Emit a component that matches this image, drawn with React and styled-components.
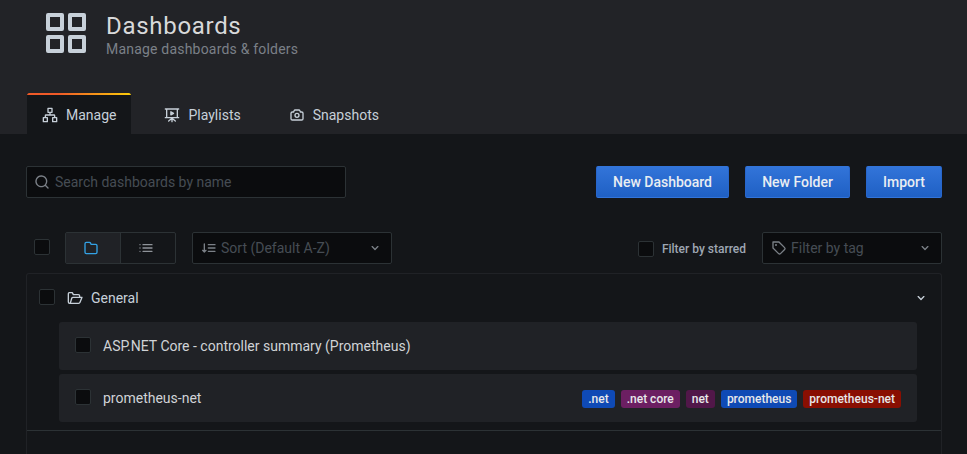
import React from "react";
import styled, { createGlobalStyle, css } from "styled-components";

const Global = createGlobalStyle`
  *, *::before, *::after { box-sizing: border-box; }
  body {
    margin: 0;
    background: #141619;
    color: #c7d0d9;
    font: 400 14px/20px Roboto, "Liberation Sans", sans-serif;
    overflow: hidden;
  }
`;

const icons = {
  apps: (
    <path fillRule="evenodd" d="M3 2h7a1 1 0 0 1 1 1v7a1 1 0 0 1-1 1H3a1 1 0 0 1-1-1V3a1 1 0 0 1 1-1ZM4 4v5h5V4ZM14 2h7a1 1 0 0 1 1 1v7a1 1 0 0 1-1 1h-7a1 1 0 0 1-1-1V3a1 1 0 0 1 1-1ZM15 4v5h5V4ZM3 13h7a1 1 0 0 1 1 1v7a1 1 0 0 1-1 1H3a1 1 0 0 1-1-1v-7a1 1 0 0 1 1-1ZM4 15v5h5v-5ZM14 13h7a1 1 0 0 1 1 1v7a1 1 0 0 1-1 1h-7a1 1 0 0 1-1-1v-7a1 1 0 0 1 1-1ZM15 15v5h5v-5Z" />
  ),
  sitemap: (
    <g fill="none" stroke="currentColor" strokeWidth="2" strokeLinejoin="round">
      <path d="M9 2h6v6H9ZM2 16h6v6H2ZM16 16h6v6h-6ZM12 8v4M5 16v-3a1 1 0 0 1 1-1h12a1 1 0 0 1 1 1v3" />
    </g>
  ),
  presentation: (
    <g fill="none" stroke="currentColor" strokeWidth="2" strokeLinecap="round" strokeLinejoin="round">
      <path d="M2 3h20M4 3v13h16V3M2 16h20M12 16v6M12 17l-5 4M12 17l5 4M10.3 7.2v4.6l4-2.3Z" />
    </g>
  ),
  camera: (
    <path d="M19,6.5H17.72l-.32-1a3,3,0,0,0-2.84-2H9.44A3,3,0,0,0,6.6,5.55l-.32,1H5a3,3,0,0,0-3,3v8a3,3,0,0,0,3,3H19a3,3,0,0,0,3-3v-8A3,3,0,0,0,19,6.5Zm1,11a1,1,0,0,1-1,1H5a1,1,0,0,1-1-1v-8a1,1,0,0,1,1-1H7a1,1,0,0,0,1-.68l.54-1.64a1,1,0,0,1,.95-.68h5.12a1,1,0,0,1,.95.68l.54,1.64A1,1,0,0,0,17,8.5h2a1,1,0,0,1,1,1Zm-8-9a4,4,0,1,0,4,4A4,4,0,0,0,12,8.5Zm0,6a2,2,0,1,1,2-2A2,2,0,0,1,12,14.5Z" />
  ),
  search: (
    <path d="M21.71,20.29,18,16.61A9,9,0,1,0,16.61,18l3.68,3.68a1,1,0,0,0,1.42,0A1,1,0,0,0,21.71,20.29ZM11,18a7,7,0,1,1,7-7A7,7,0,0,1,11,18Z" />
  ),
  folder: (
    <path d="M19,5.5H12.72l-.32-1a3,3,0,0,0-2.84-2H5a3,3,0,0,0-3,3v13a3,3,0,0,0,3,3H19a3,3,0,0,0,3-3V8.5A3,3,0,0,0,19,5.5Zm1,13a1,1,0,0,1-1,1H5a1,1,0,0,1-1-1V5.5a1,1,0,0,1,1-1H9.56a1,1,0,0,1,.95.68l.54,1.64A1,1,0,0,0,12,7.5h7a1,1,0,0,1,1,1Z" />
  ),
  folderOpen: (
    <g fill="none" stroke="currentColor" strokeWidth="2" strokeLinecap="round" strokeLinejoin="round">
      <path d="M4 20a2 2 0 0 1-2-2V5.500a1.500 1.500 0 0 1 1.500-1.500H8l1.500 3H17a2 2 0 0 1 2 2v2M4 20h13.500a2 2 0 0 0 1.900-1.400L22.500 11H9a2 2 0 0 0-1.900 1.400L5.300 18.600A2 2 0 0 1 4 20" />
    </g>
  ),
  list: (
    <g fill="none" stroke="currentColor" strokeWidth="2" strokeLinecap="round">
      <path d="M3 7h.01M3 12h.01M3 17h.01M7.500 7H21M7.500 12H21M7.500 17H21" />
    </g>
  ),
  sort: (
    <g fill="none" stroke="currentColor" strokeWidth="2" strokeLinecap="round" strokeLinejoin="round">
      <path d="M5 6v12M2.500 15.500 5 18l2.500-2.500M11 7h10M11 12h10M11 17h10" />
    </g>
  ),
  tag: (
    <path d="M7.5,6A1.5,1.5,0,1,0,9,7.5,1.5,1.5,0,0,0,7.5,6Zm13.62,4.71L12.71,2.29A1,1,0,0,0,12,2H3A1,1,0,0,0,2,3v9a1,1,0,0,0,.29.71l8.42,8.41a3,3,0,0,0,4.24,0L21.12,15a3,3,0,0,0,0-4.24Zm-1.41,2.82h0l-6.18,6.17a1,1,0,0,1-1.41,0L4,11.59V4h7.59l8.12,8.12a1,1,0,0,1,.29.71A1,1,0,0,1,19.71,13.53Z" />
  ),
  chevron: (
    <path d="M17,9.17a1,1,0,0,0-1.41,0L12,12.71,8.46,9.17a1,1,0,0,0-1.41,0,1,1,0,0,0,0,1.42l4.24,4.24a1,1,0,0,0,1.42,0L17,10.59A1,1,0,0,0,17,9.17Z" />
  ),
};

const Svg = styled.svg`
  display: block;
  flex: none;
  fill: currentColor;
  width: ${(p) => p.$size}px;
  height: ${(p) => p.$size}px;
`;
const Icon = ({ name, size = 16 }) => (
  <Svg viewBox="0 0 24 24" $size={size} aria-hidden="true">{icons[name]}</Svg>
);

const Page = styled.div`
  height: 454px;
  overflow: hidden;
`;
const Header = styled.header`
  height: 134px;
  padding: 0 26px;
  display: flex;
  flex-direction: column;
  justify-content: space-between;
  background: linear-gradient(180deg, #222327 0%, #222327 70%, #25272a 100%);
  background: #222327;
`;
const Brand = styled.div`
  display: flex;
  gap: 16px;
  padding: 9px 0 0 16px;
`;
const Title = styled.h1`
  margin: 3px 0 0;
  font-size: 24px;
  line-height: 28px;
  font-weight: 400;
  letter-spacing: 0.7px;
  color: #d8d9da;
`;
const Subtitle = styled.div`
  line-height: 18px;
  color: #7b8087;
  letter-spacing: 0.2px;
`;
const Tabs = styled.nav`
  display: flex;
  gap: 16px;
`;
const Tab = styled.a`
  display: flex;
  align-items: center;
  gap: 8px;
  height: 41px;
  padding: 2px 15px 0;
  border: solid transparent;
  border-width: 0 1px;
  color: #c7d0d9;
  ${(p) => p.$active && css`
    background: linear-gradient(90deg, #f05a28 30%, #fbca0a 99%) top / 100% 2px no-repeat padding-box, #141619 padding-box;
    border-radius: 3px 3px 0 0;
  `}
`;
const Main = styled.main`
  padding: 32px 25px 0 26px;
`;
const Toolbar = styled.div`
  display: flex;
  gap: 16px;
  margin-bottom: 34px;
`;
const Field = styled.div`
  display: flex;
  align-items: center;
  gap: ${(p) => p.$gap || 5}px;
  width: ${(p) => p.$width}px;
  height: 32px;
  padding: 0 8px 0 ${(p) => p.$pad || 7}px;
  border: 1px solid #2c3235;
  border-radius: 2px;
  background: #0b0c0e;
  color: #7b8087;
`;
const Placeholder = styled.span`
  flex: 1;
  color: #464c54;
`;
const Spacer = styled.div`
  flex: 1;
`;
const Button = styled.button`
  width: ${(p) => p.$width}px;
  height: 32px;
  padding: 0;
  border: 1px solid #1f60c4;
  border-color: #3274d9 #2866cb #3274d9;
  border-radius: 2px;
  background: linear-gradient(180deg, #3274d9, #1f60c4);
  color: #e9edf2;
  font: 500 14px/20px Roboto, sans-serif;
`;
const Filters = styled.div`
  display: flex;
  align-items: center;
  padding-left: 8px;
  margin-bottom: 9px;
`;
const Checkbox = styled.span`
  flex: none;
  width: 16px;
  height: 16px;
  margin-top: ${(p) => p.$shift || 0}px;
  border: 1px solid #2c3235;
  border-radius: 2px;
  background: #0b0c0e;
`;
const Segments = styled.div`
  display: flex;
  margin: 0 16px 0 15px;
  width: 111px;
  height: 32px;
  border: 1px solid #2c3235;
  border-radius: 2px;
`;
const Segment = styled.span`
  flex: 1;
  display: flex;
  align-items: center;
  padding-left: 17px;
  padding-bottom: 1px;
  color: #8e9399;
  ${(p) => p.$active && css`
    background: #202226;
    border-right: 1px solid #2c3235;
    color: #33a2e5;
  `}
`;
const Label = styled.span`
  margin: 2px 16px 0 8px;
  font-size: 12px;
  font-weight: 500;
  color: #9fa7b3;
`;
const Section = styled.section`
  height: 200px;
  border: 1px solid #202226;
  border-bottom: 0;
  border-radius: 3px 3px 0 0;
`;
const SectionHeader = styled.div`
  display: flex;
  align-items: center;
  height: 48px;
  padding: 0 12px;
`;
const SectionName = styled.span`
  flex: 1;
  margin-left: 8px;
`;
const FolderIcon = styled.span`
  margin-left: 12px;
`;
const Items = styled.div`
  display: flex;
  flex-direction: column;
  gap: 4px;
  padding: 0 24px 8px 32px;
  border-bottom: 1px solid #2c3235;
`;
const Item = styled.div`
  display: flex;
  align-items: center;
  height: 48px;
  padding: 0 16px;
  gap: 12px;
  border-radius: 3px;
  background: #202226;
  color: #d0d3d6;
`;
const ItemName = styled.span`
  flex: 1;
`;
const Tags = styled.div`
  display: flex;
  gap: 6px;
  padding-top: 1px;
`;
const Tag = styled.span`
  height: 18px;
  padding: 0 6px;
  border-radius: 3px;
  font-size: 12px;
  line-height: 19px;
  font-weight: 500;
  color: #e7e8ea;
  background: ${(p) => p.$color};
`;

const dashboards = [
  { name: "ASP.NET Core - controller summary (Prometheus)", tags: [] },
  {
    name: "prometheus-net",
    tags: [
      [".net", "#0f4ab5"],
      [".net core", "#6c1f62"],
      ["net", "#511749"],
      ["prometheus", "#0f4ab5"],
      ["prometheus-net", "#890f02"],
    ],
  },
];

export default function App() {
  return (
    <Page>
      <Global />
      <Header>
        <Brand>
          <Icon name="apps" size={48} />
          <div>
            <Title>Dashboards</Title>
            <Subtitle>Manage dashboards &amp; folders</Subtitle>
          </div>
        </Brand>
        <Tabs>
          <Tab $active><Icon name="sitemap" />Manage</Tab>
          <Tab><Icon name="presentation" />Playlists</Tab>
          <Tab><Icon name="camera" />Snapshots</Tab>
        </Tabs>
      </Header>
      <Main>
        <Toolbar>
          <Field $width={320}><Icon name="search" /><Placeholder>Search dashboards by name</Placeholder></Field>
          <Spacer />
          <Button $width={133}>New Dashboard</Button>
          <Button $width={105}>New Folder</Button>
          <Button $width={76}>Import</Button>
        </Toolbar>
        <Filters>
          <Checkbox $shift={-2} />
          <Segments>
            <Segment $active><Icon name="folder" /></Segment>
            <Segment><Icon name="list" /></Segment>
          </Segments>
          <Field $width={200} $pad={8} $gap={4}><Icon name="sort" /><Placeholder>Sort (Default A-Z)</Placeholder><Icon name="chevron" /></Field>
          <Spacer />
          <Checkbox $shift={2} />
          <Label>Filter by starred</Label>
          <Field $width={180} $pad={8} $gap={4}><Icon name="tag" /><Placeholder>Filter by tag</Placeholder><Icon name="chevron" /></Field>
        </Filters>
        <Section>
          <SectionHeader>
            <Checkbox $shift={-2} />
            <FolderIcon><Icon name="folderOpen" /></FolderIcon>
            <SectionName>General</SectionName>
            <Icon name="chevron" />
          </SectionHeader>
          <Items>
            {dashboards.map((d) => (
              <Item key={d.name}>
                <Checkbox $shift={-2} />
                <ItemName>{d.name}</ItemName>
                <Tags>{d.tags.map(([t, c]) => <Tag key={t} $color={c}>{t}</Tag>)}</Tags>
              </Item>
            ))}
          </Items>
        </Section>
      </Main>
    </Page>
  );
}
